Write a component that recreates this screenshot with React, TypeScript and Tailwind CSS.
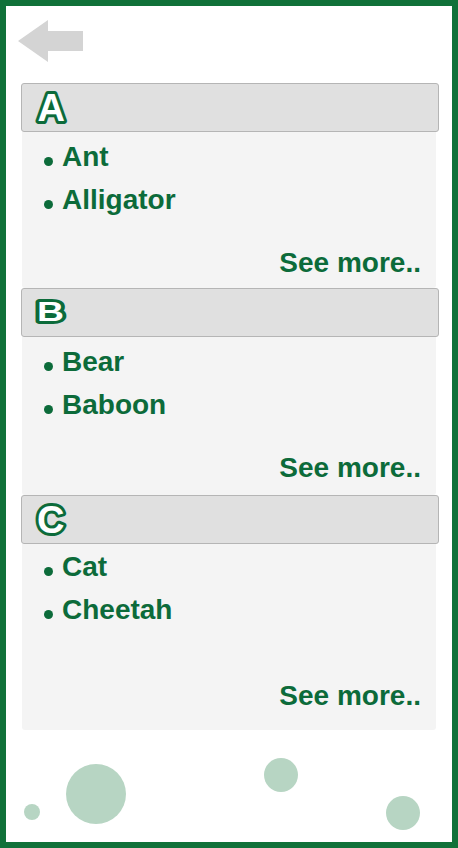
import React from 'react';

const GREEN = '#0c6b3a';

interface SectionProps {
  letter: React.ReactNode;
  items: string[];
  bodyClass: string;
  footClass: string;
}

const Section: React.FC<SectionProps> = ({ letter, items, bodyClass, footClass }) => {
  return (
    <div className="flex flex-col">
      <div className="flex h-[49px] w-[418px] items-stretch rounded-[3px] border border-[#b5b5b5] bg-[#e0e0e0]">
        <svg width="60" height="47" viewBox="0 0 60 47" className="block">
          {letter}
        </svg>
      </div>
      <div className={`ml-[1px] flex w-[414px] flex-col rounded-b-[3px] bg-[#f4f4f4] ${bodyClass}`}>
        <ul className="flex flex-col pl-[22px]">
          {items.map((item) => (
            <li key={item} className="flex items-center text-[28px] font-bold leading-[43px] text-[#0c6b3a]">
              <span className="mt-[9px] mr-[9px] h-[9px] w-[9px] shrink-0 rounded-full bg-[#0c6b3a]" />
              {item}
            </li>
          ))}
        </ul>
        <div className={`mt-auto pr-[15px] text-right text-[28px] font-bold leading-[43px] text-[#0c6b3a] ${footClass}`}>
          See more..
        </div>
      </div>
    </div>
  );
};

const letterProps = {
  fill: '#ffffff',
  stroke: GREEN,
  strokeWidth: 6,
  strokeLinejoin: 'round' as const,
  paintOrder: 'stroke',
  fontFamily: "'Liberation Sans', Arial, sans-serif",
  fontWeight: 700,
};

const App: React.FC = () => {
  return (
    <div
      className="relative h-[848px] w-[458px] overflow-hidden border-[6px] border-[#107139] bg-white font-['Liberation_Sans',Arial,sans-serif]"
      style={{ color: GREEN }}
    >
      {/* back arrow */}
      <div className="pl-[12px] pt-[14px]">
        <svg width="65" height="42" viewBox="0 0 65 42" className="block">
          <polygon points="0,21 30,0 30,11 65,11 65,31 30,31 30,42" fill="#d4d4d4" />
        </svg>
      </div>

      <div className="mt-[21px] flex flex-col pl-[15px]">
        <Section
          letter={
            <text x="15.5" y="36.5" fontSize="38" {...letterProps}>
              A
            </text>
          }
          items={['Ant', 'Alligator']}
          bodyClass="h-[156px] pt-[3px]"
          footClass="pb-[4px]"
        />
        <Section
          letter={
            <text x="15" y="32" fontSize="28" textLength="27" lengthAdjust="spacingAndGlyphs" {...letterProps}>
              B
            </text>
          }
          items={['Bear', 'Baboon']}
          bodyClass="h-[158px] pt-[3px]"
          footClass="pb-[6px]"
        />
        <Section
          letter={
            <text x="15" y="37" fontSize="38" {...letterProps}>
              C
            </text>
          }
          items={['Cat', 'Cheetah']}
          bodyClass="h-[186px] pt-[1px]"
          footClass="pb-[13px]"
        />
      </div>

      {/* decorative bubbles */}
      <div className="absolute left-[18px] top-[798px] h-[16px] w-[16px] rounded-full bg-[#b7d5c3]" />
      <div className="absolute left-[60px] top-[758px] h-[60px] w-[60px] rounded-full bg-[#b7d5c3]" />
      <div className="absolute left-[258px] top-[752px] h-[34px] w-[34px] rounded-full bg-[#b7d5c3]" />
      <div className="absolute left-[380px] top-[790px] h-[34px] w-[34px] rounded-full bg-[#b7d5c3]" />
    </div>
  );
};

export default App;
